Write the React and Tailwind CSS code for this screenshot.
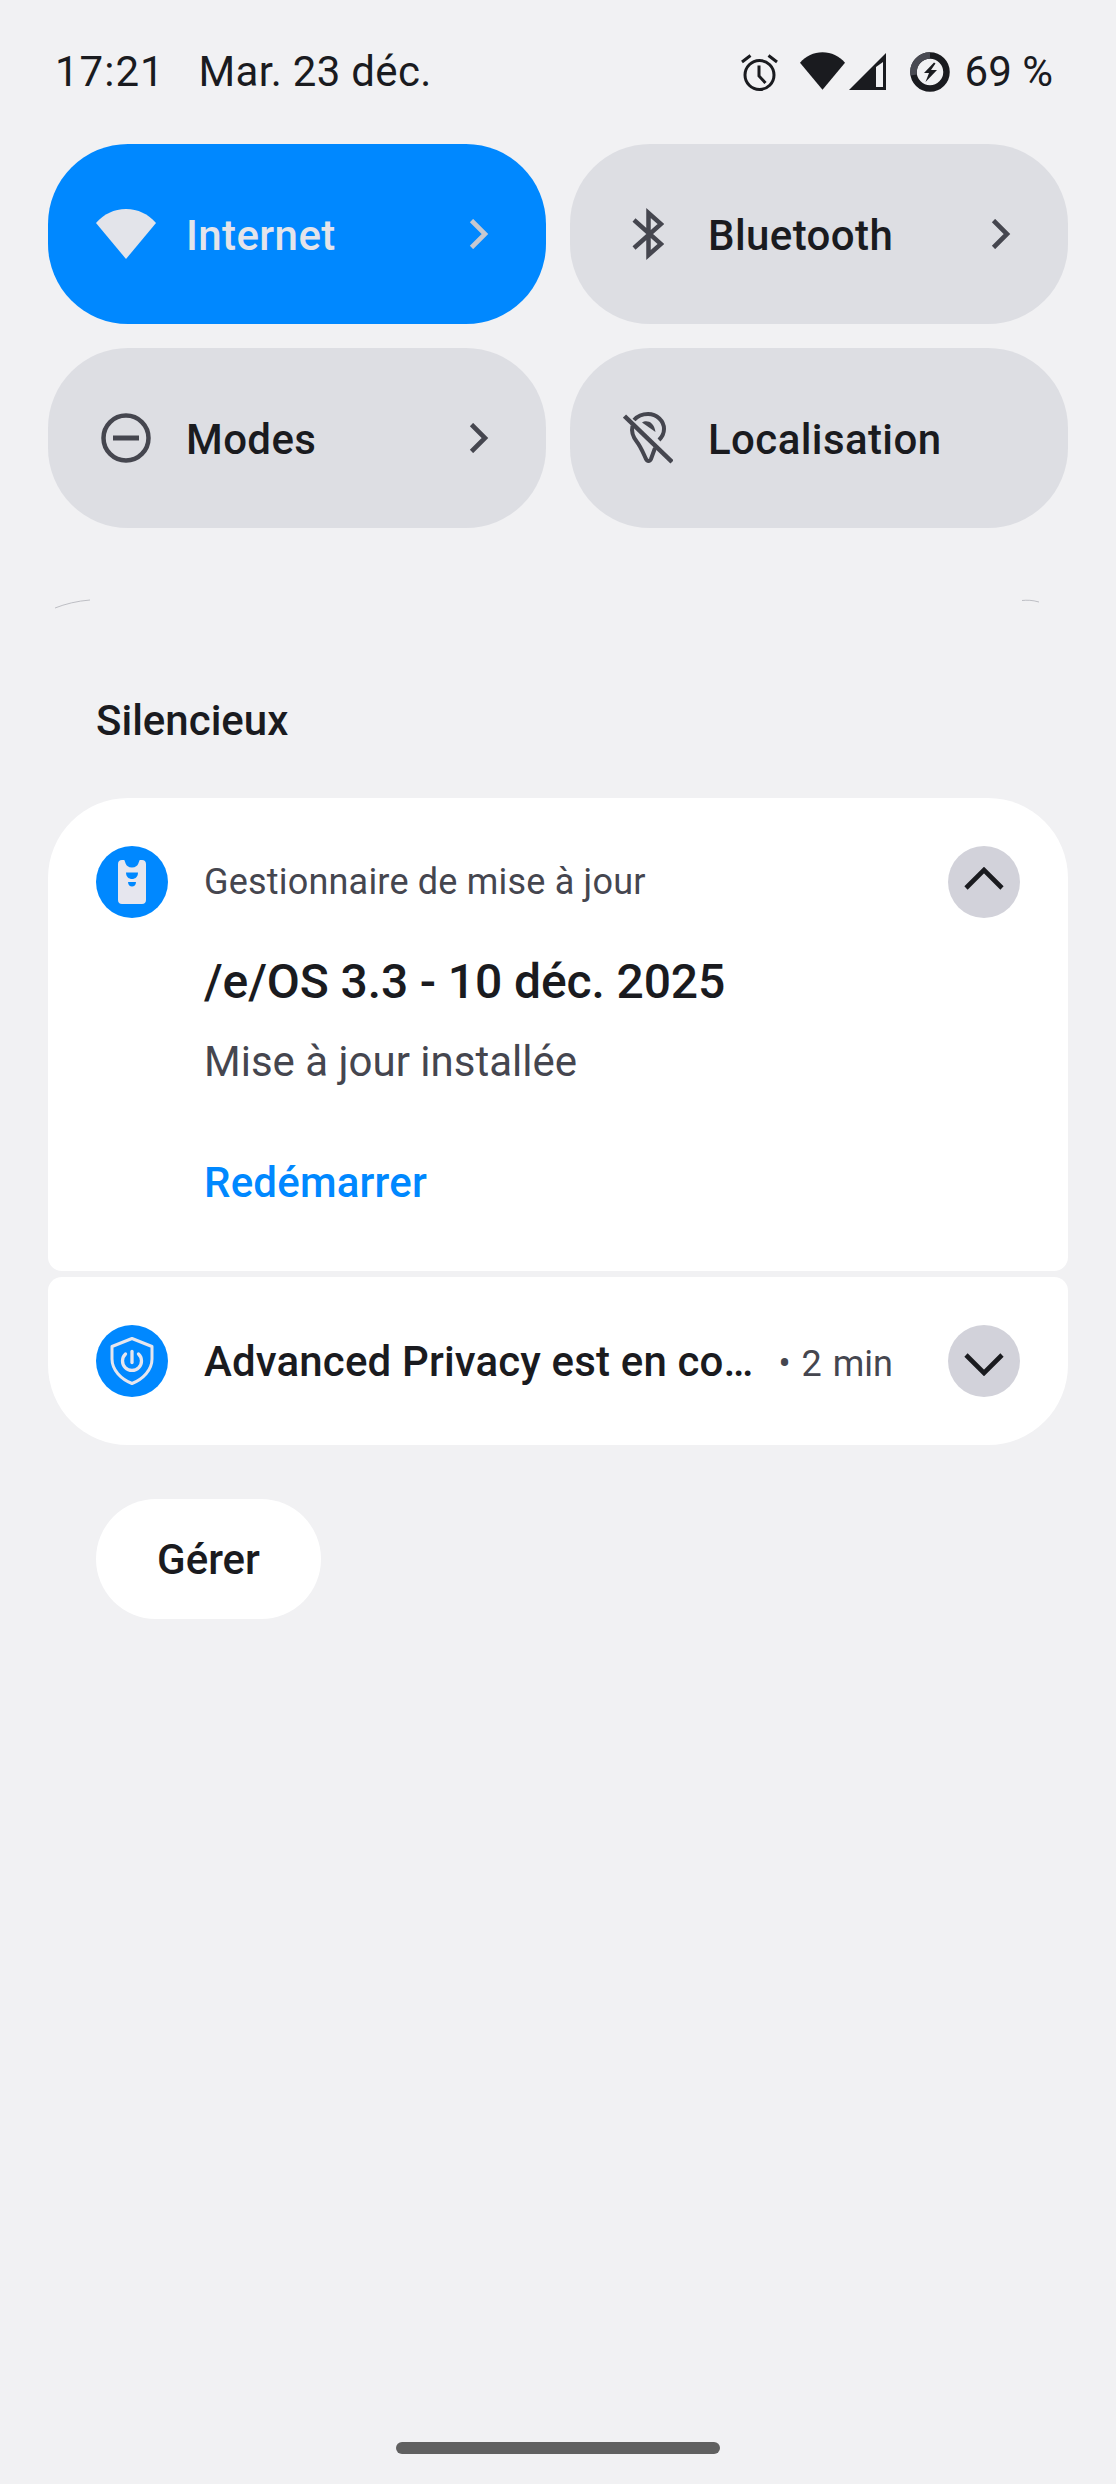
import React from 'react'

function WifiIcon({ className }) {
  return (
    <svg viewBox="0 0 60 50" className={className} fill="currentColor">
      <path d="M0 14 C8 5 18 0 30 0 C42 0 52 5 60 14 L30 50 Z" />
    </svg>
  )
}

function AlarmIcon() {
  return (
    <svg viewBox="0 0 37 38" className="w-[37px] h-[38px] text-[#1a1b1f]" fill="none" stroke="currentColor" strokeWidth="3">
      <circle cx="18.5" cy="22" r="14.5" />
      <path d="M18 12.5v10.5l6.5 7" />
      <path d="M1 9 L9.5 2.5 M36 9 L27.5 2.5" />
    </svg>
  )
}

function SignalIcon() {
  return (
    <svg viewBox="0 0 37 37" className="w-[37px] h-[37px] text-[#1a1b1f]" fill="currentColor">
      <path d="M37 0V37H0Z" />
      <path d="M27 14 L34 9 V34 H27 Z" fill="#f1f1f3" />
    </svg>
  )
}

function BatteryIcon() {
  return (
    <svg viewBox="0 0 40 40" className="w-[40px] h-[40px]" fill="none">
      <circle cx="20" cy="20" r="16.5" stroke="#1a1b1f" strokeWidth="6.5" />
      <path d="M3.7 23 A16.5 16.5 0 0 1 20 3.5" stroke="#494a52" strokeWidth="6.5" />
      <path d="M24 10.5 L14 21 H19 L15.5 30 L27 18 H21 L25.5 11.5 Z" fill="#1a1b1f" />
    </svg>
  )
}

function BluetoothIcon() {
  return (
    <svg viewBox="0 0 32 52" className="w-[32px] h-[52px] text-[#45464f]" fill="none" stroke="currentColor" strokeWidth="4.5">
      <path d="M2 12 L29 36 L16.5 47 V5 L29 16 L2 40" />
    </svg>
  )
}

function ModesIcon() {
  return (
    <svg viewBox="0 0 50 50" className="w-[50px] h-[50px] text-[#45464f]" fill="none" stroke="currentColor" strokeWidth="4.5">
      <circle cx="25" cy="25" r="22.5" />
      <path d="M12 25H38" strokeWidth="5" />
    </svg>
  )
}

function LocationOffIcon() {
  return (
    <svg viewBox="0 0 50 52" className="w-[50px] h-[52px] text-[#45464f]" fill="none" stroke="currentColor" strokeWidth="4">
      <path d="M1.5 4 L49 50" strokeWidth="4.5" />
      <path d="M11 8 C15 3.5 20 2 25 2 C34 2 41 9 41 17 C41 21 39 25 36 28" />
      <path d="M9.5 14 C8 20 10 25 14 30 C18 35 21 43 23 47 C24 49.5 27 49.5 28 47 L32 36" />
      <path d="M19 10.5 C23 7.5 31 9 32.5 20 Z" fill="currentColor" stroke="none" />
    </svg>
  )
}

function UpdaterIcon() {
  return (
    <svg viewBox="0 0 28 44" className="w-[28px] h-[44px]">
      <path d="M4 0 H6 C7.5 0 6.5 7.5 14 7.5 C21.5 7.5 20.5 0 22 0 H24 C26.5 0 28 1.5 28 4 V40 C28 42.5 26.5 44 24 44 H4 C1.5 44 0 42.5 0 40 V4 C0 1.5 1.5 0 4 0 Z" fill="#e6e6ee" />
      <path d="M8 12.5 H20 C20 17 17 19 14 19 C11 19 8 17 8 12.5 Z" fill="#0088ff" />
      <path d="M10 22 H18 C18 25 16 26.5 14 26.5 C12 26.5 10 25 10 22 Z" fill="#0088ff" />
    </svg>
  )
}

function ShieldIcon() {
  return (
    <svg viewBox="0 0 44 48" className="w-[44px] h-[48px] text-[#e6e6ee]" fill="none" stroke="currentColor" strokeWidth="3" strokeLinecap="round">
      <path d="M22 1.5 L42 9.5 V22 C42 33 33 42 22 46.5 C11 42 2 33 2 22 V9.5 Z" strokeLinejoin="round" />
      <path d="M15.5 17 A9.5 9.5 0 1 0 28.5 17" strokeWidth="3.3" />
      <path d="M22 14.5 V25.5" strokeWidth="3.3" />
    </svg>
  )
}

function TileChevron({ className }) {
  return (
    <svg viewBox="0 0 20 30" className={className} fill="none" stroke="currentColor" strokeWidth="4.6">
      <path d="M2.5 1.5 L16 15 L2.5 28.5" />
    </svg>
  )
}

function Tile({ icon, label, active, chevron = true }) {
  return (
    <div className={`h-[180px] rounded-[80px] flex items-center ${active ? 'bg-[#0088ff]' : 'bg-[#dddee3]'}`}>
      <div className="ml-[28px] w-[100px] shrink-0 flex justify-center">{icon}</div>
      <span className={`flex-1 pl-[10px] pt-[3px] text-[42px] font-medium tracking-[0.4px] leading-none ${active ? 'text-[#e3e4ea]' : 'text-[#1a1b1f]'}`}>
        {label}
      </span>
      {chevron && (
        <TileChevron className={`w-[20px] h-[30px] mr-[57px] ${active ? 'text-[#c7c8d0]' : 'text-[#45464f]'}`} />
      )}
    </div>
  )
}

function ExpandButton({ up }) {
  return (
    <div className="w-[72px] h-[72px] rounded-full bg-[#d2d2da] flex items-center justify-center shrink-0">
      <svg
        viewBox="0 0 40 24"
        className={`w-[40px] h-[24px] text-[#1a1b1f] ${up ? '-translate-y-[3px]' : 'translate-y-[3px]'}`}
        fill="none"
        stroke="currentColor"
        strokeWidth="4.6"
      >
        <path d={up ? 'M2 21 L20 3 L38 21' : 'M2 3 L20 21 L38 3'} />
      </svg>
    </div>
  )
}

export default function App() {
  return (
    <div
      className="relative w-[1116px] h-[2484px] bg-[#f1f1f3] text-[#1a1b1f] overflow-hidden px-[48px]"
      style={{ fontFamily: 'Roboto, sans-serif' }}
    >
      {/* Status bar */}
      <div className="h-[144px] flex items-start pt-[51px]">
        <div className="flex items-center pl-[7px] text-[42px] leading-none whitespace-nowrap">
          <span className="tracking-[1px]">17:21</span>
          <span className="ml-[34px] tracking-[0.3px]">Mar. 23 déc.</span>
        </div>
        <div className="ml-auto flex items-start pr-[15px]">
          <div className="mt-[2px]"><AlarmIcon /></div>
          <WifiIcon className="w-[45px] h-[38px] mt-[1px] ml-[22px] text-[#1a1b1f]" />
          <div className="mt-[2px] ml-[4px]"><SignalIcon /></div>
          <div className="mt-[1px] ml-[24px]"><BatteryIcon /></div>
          <span className="text-[42px] leading-none ml-[15px] whitespace-nowrap">69 %</span>
        </div>
      </div>

      {/* Quick tiles */}
      <div className="grid grid-cols-2 gap-x-[24px] gap-y-[24px]">
        <Tile active label="Internet" icon={<WifiIcon className="w-[60px] h-[50px] text-[#e3e4ea]" />} />
        <Tile label="Bluetooth" icon={<BluetoothIcon />} />
        <Tile label="Modes" icon={<ModesIcon />} />
        <Tile label="Localisation" chevron={false} icon={<LocationOffIcon />} />
      </div>

      {/* Faint corner arcs of the clipped media panel */}
      <svg className="absolute left-[55px] top-[599px] w-[36px] h-[10px]" viewBox="0 0 36 10" fill="none">
        <path d="M0 9 C10 5 22 2 35 1" stroke="#b0b1b7" strokeWidth="0.8" />
      </svg>
      <svg className="absolute left-[1022px] top-[599px] w-[18px] h-[4px]" viewBox="0 0 18 4" fill="none">
        <path d="M0 1.5 C5 1 10 1 17 3" stroke="#b0b1b7" strokeWidth="0.8" />
      </svg>

      {/* Section title */}
      <div className="mt-[168px] pl-[48px] text-[42px] font-medium leading-[50px]">Silencieux</div>

      {/* Notifications */}
      <div className="mt-[52px] flex flex-col gap-[6px]">
        <div className="h-[473px] bg-white rounded-t-[80px] rounded-b-[14px] px-[48px] pt-[48px]">
          <div className="flex items-start">
            <div className="w-[72px] h-[72px] rounded-full bg-[#0088ff] flex items-center justify-center shrink-0">
              <UpdaterIcon />
            </div>
            <div className="flex-1 pl-[36px]">
              <div className="h-[72px] flex items-center text-[36px] tracking-[0.2px] text-[#45464f]">Gestionnaire de mise à jour</div>
              <div className="mt-[37px] text-[48px] font-medium tracking-[-0.12px] leading-[54px]">/e/OS 3.3 - 10 déc. 2025</div>
              <div className="mt-[28px] text-[42px] text-[#45464f] leading-[50px]">Mise à jour installée</div>
              <div className="mt-[71px] text-[42px] font-medium tracking-[0.2px] text-[#0088ff] leading-[50px]">Redémarrer</div>
            </div>
            <ExpandButton up />
          </div>
        </div>
        <div className="h-[168px] bg-white rounded-t-[14px] rounded-b-[80px] px-[48px] pt-[48px]">
          <div className="flex items-center h-[72px]">
            <div className="w-[72px] h-[72px] rounded-full bg-[#0088ff] flex items-center justify-center shrink-0">
              <ShieldIcon />
            </div>
            <div className="flex-1 pl-[36px] flex items-baseline whitespace-nowrap">
              <span className="text-[42px] font-medium tracking-[0.15px]">Advanced Privacy est en co…</span>
              <span className="ml-[25px] text-[36px] text-[#45464f] [word-spacing:2px]">• 2 min</span>
            </div>
            <ExpandButton />
          </div>
        </div>
      </div>

      {/* Manage button */}
      <div className="mt-[54px] ml-[48px] w-[225px] h-[120px] rounded-[60px] bg-white flex items-center justify-center text-[42px] font-medium">
        Gérer
      </div>

      {/* Gesture handle */}
      <div className="absolute left-[396px] bottom-[30px] w-[324px] h-[12px] rounded-full bg-[#606060]" />
    </div>
  )
}
